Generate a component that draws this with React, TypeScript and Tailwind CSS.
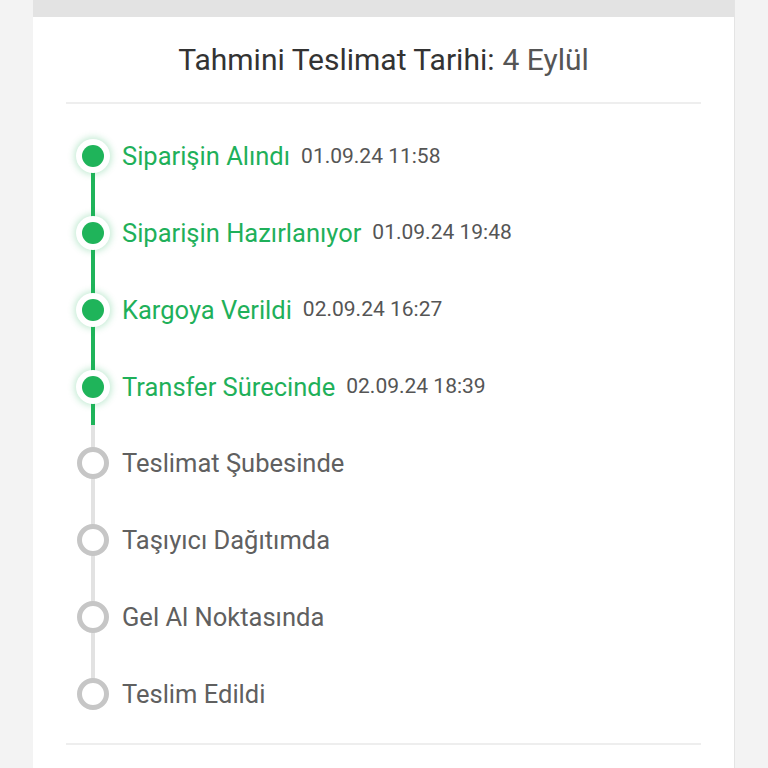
const steps = [
  { label: "Siparişin Alındı", date: "01.09.24 11:58", done: true },
  { label: "Siparişin Hazırlanıyor", date: "01.09.24 19:48", done: true },
  { label: "Kargoya Verildi", date: "02.09.24 16:27", done: true },
  { label: "Transfer Sürecinde", date: "02.09.24 18:39", done: true },
  { label: "Teslimat Şubesinde", done: false },
  { label: "Taşıyıcı Dağıtımda", done: false },
  { label: "Gel Al Noktasında", done: false },
  { label: "Teslim Edildi", done: false },
];

export default function App() {
  return (
    <div className="min-h-[768px] bg-[#f3f3f3] font-['Roboto',sans-serif]">
      <div className="ml-[33px] w-[702px] border-r border-[#e4e4e4] bg-white">
        <div className="h-[17px] bg-[#e3e3e3]" />
        <div className="px-[33px]">
          <div className="flex h-[85px] items-center justify-center text-[30px] text-[#333]">
            Tahmini Teslimat Tarihi:<span className="ml-2 text-[#555]">4 Eylül</span>
          </div>
          <div className="h-[2px] bg-[#eeeeee]" />
          <ul className="pt-[14px]">
            {steps.map((s, i) => (
              <li key={s.label} className="flex h-[76.75px] items-center">
                <div className="relative flex h-full w-[54px] items-center justify-center">
                  {i > 0 && (
                    <div
                      className={`absolute left-[25px] top-0 h-1/2 w-[4px] ${
                        s.done ? "bg-[#1fb45a]" : "bg-[#e2e2e2]"
                      }`}
                    />
                  )}
                  {i < steps.length - 1 && (
                    <div
                      className={`absolute left-[25px] bottom-0 h-1/2 w-[4px] ${
                        s.done ? "bg-[#1fb45a]" : "bg-[#e2e2e2]"
                      }`}
                    />
                  )}
                  {s.done ? (
                    <div className="relative z-10 flex h-[34px] w-[34px] items-center justify-center rounded-full bg-white shadow-[0_0_6px_2px_rgba(31,180,90,0.25)]">
                      <div className="h-[22px] w-[22px] rounded-full bg-[#1fb45a]" />
                    </div>
                  ) : (
                    <div className="relative z-10 h-[32px] w-[32px] rounded-full border-[5px] border-[#c6c6c6] bg-white" />
                  )}
                </div>
                <span
                  className={`ml-[2px] text-[25.5px] ${
                    s.done ? "text-[#1fb05a]" : "text-[#606060]"
                  }`}
                >
                  {s.label}
                </span>
                {s.date && (
                  <span className="ml-[11px] text-[21px] text-[#555]">{s.date}</span>
                )}
              </li>
            ))}
          </ul>
          <div className="mt-[11px] h-[2px] bg-[#eeeeee]" />
          <div className="h-[40px]" />
        </div>
      </div>
    </div>
  );
}
